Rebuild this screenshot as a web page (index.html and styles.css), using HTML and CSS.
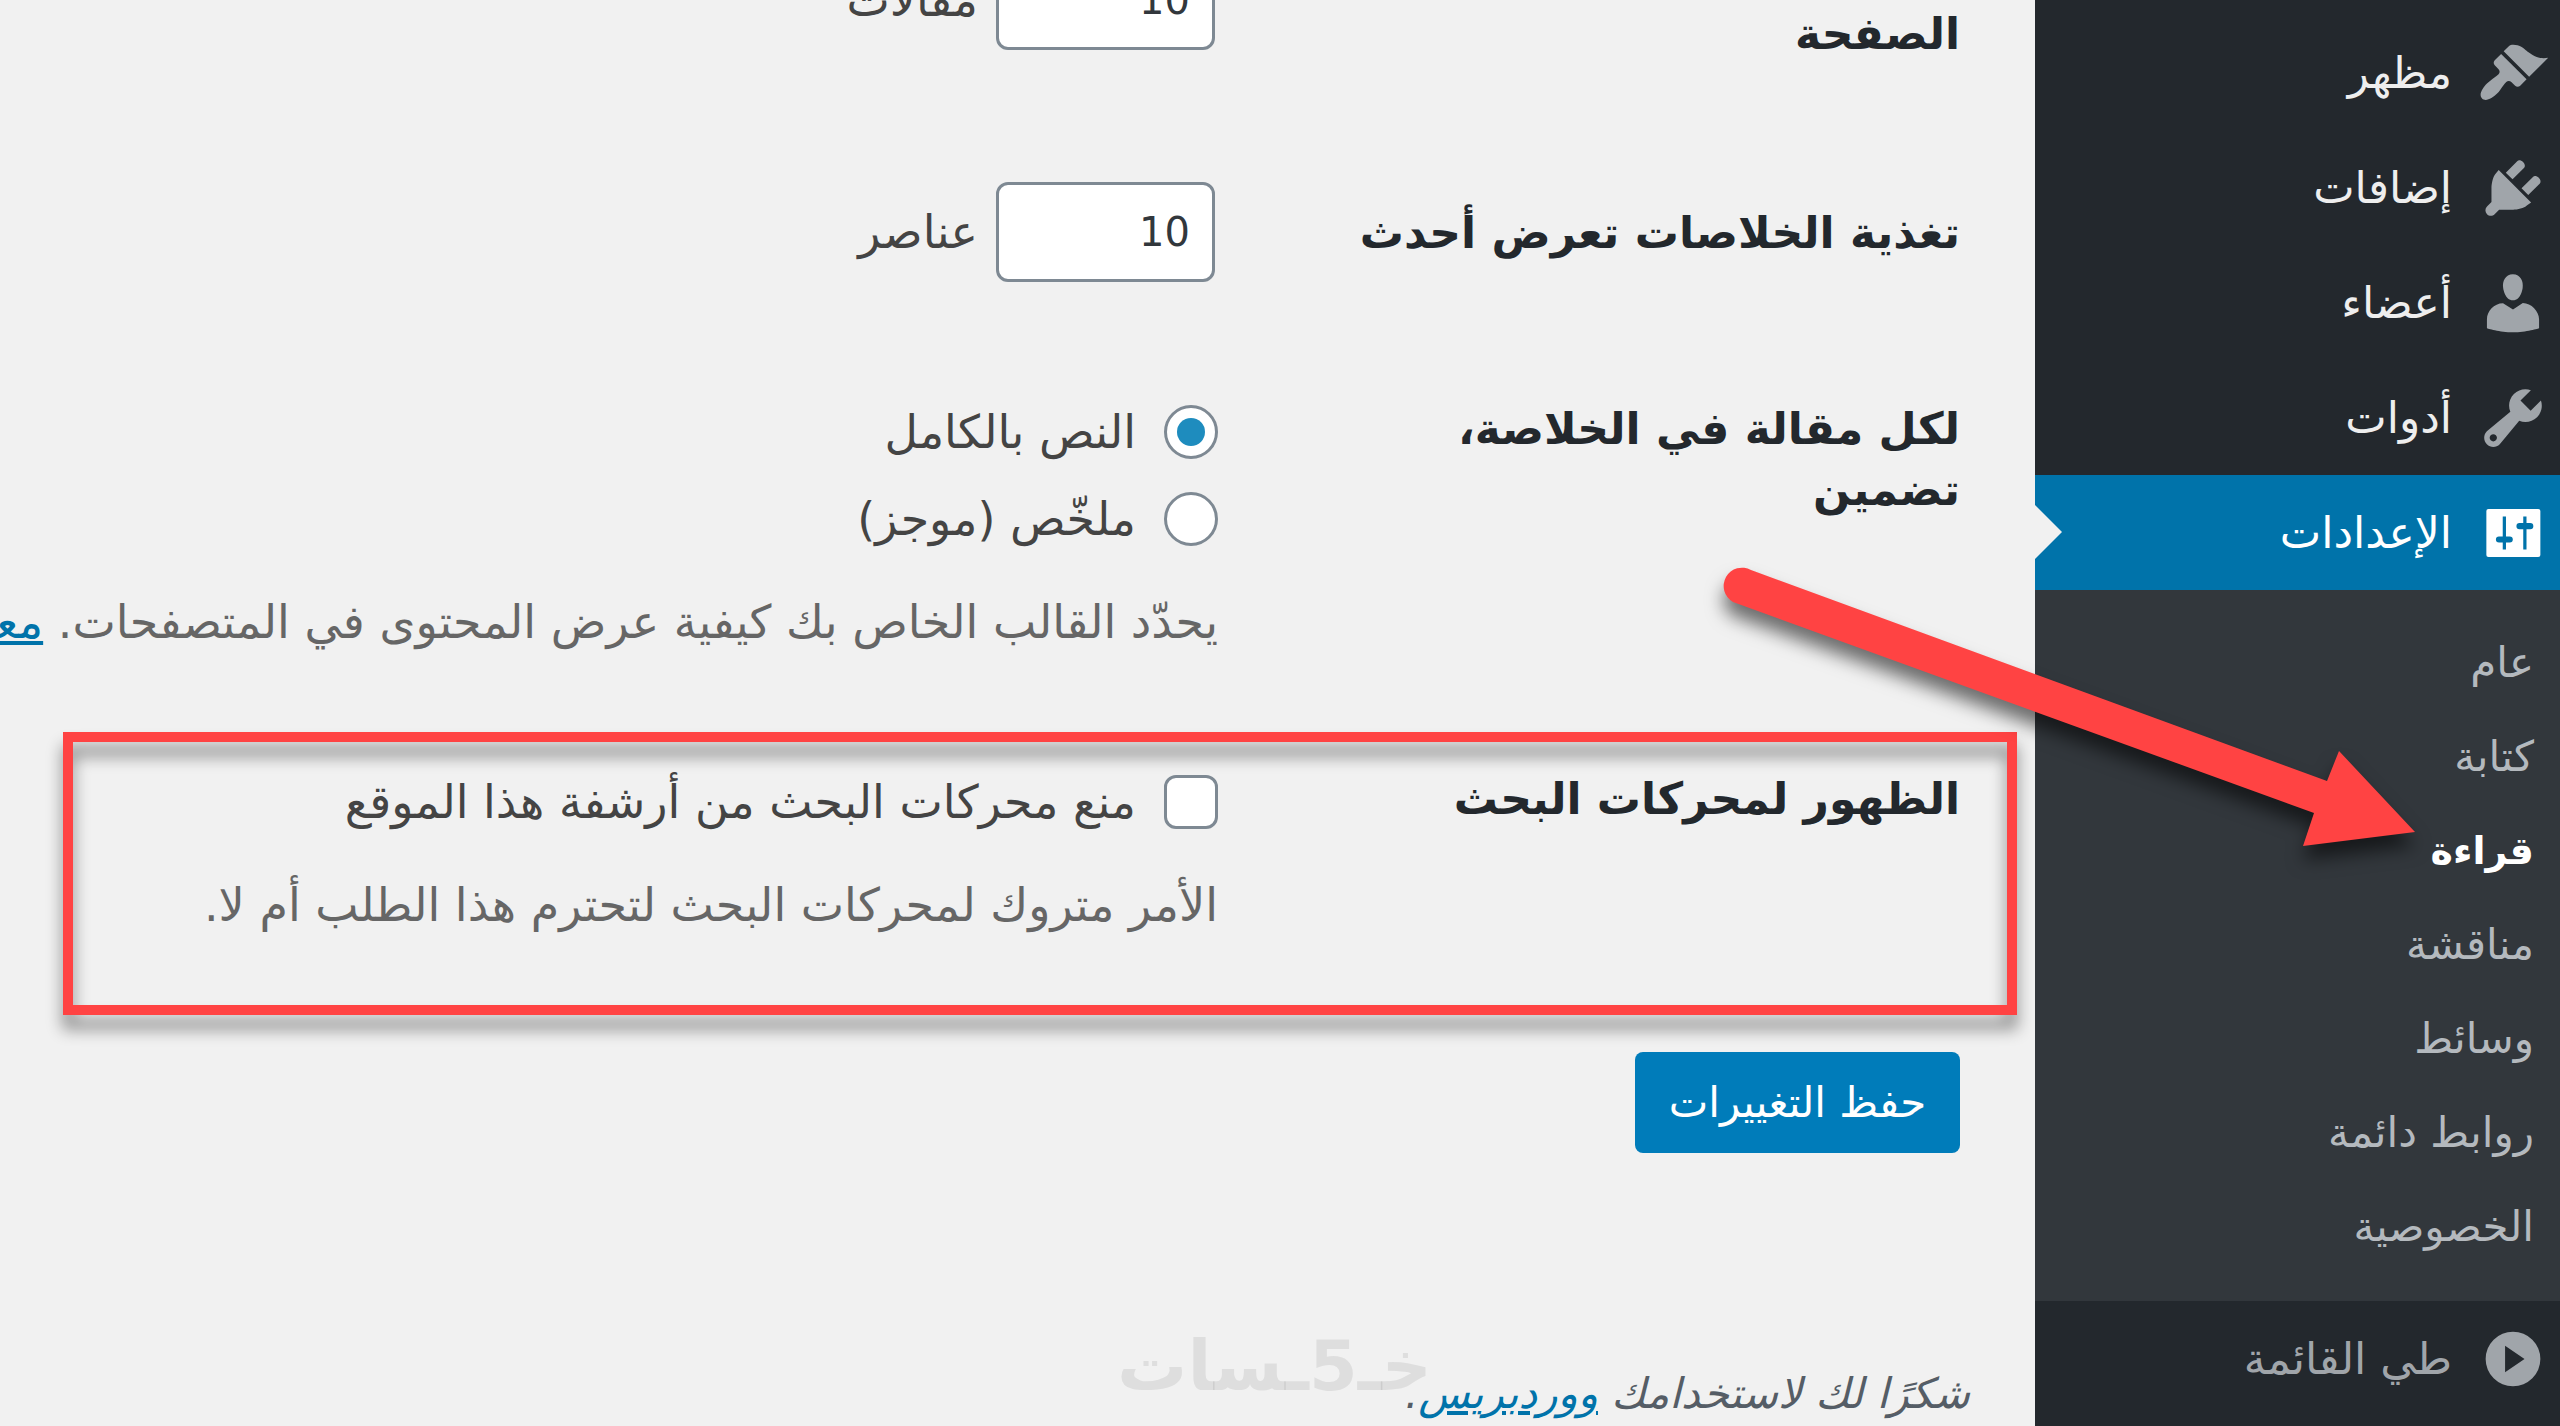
FILE: index.html
```html
<!DOCTYPE html>
<html lang="ar" dir="rtl">
<head>
<meta charset="utf-8">
<title>إعدادات القراءة</title>
<link rel="stylesheet" href="styles.css">
</head>
<body>
<nav class="sidebar">
  <ul class="menu">
    <li><a class="menu-item" href="#"><svg class="icon" viewBox="0 0 20 20"><path d="M14.48 11.06L7.41 3.99l1.5-1.5c.5-.56 2.3-.47 3.51.32 1.21.8 1.43 1.28 2.91 2.1 1.18.64 2.45 1.26 4.45.85zm-.71.71L6.7 4.7 4.93 6.47c-.39.39-.39 1.02 0 1.41l1.06 1.06c.39.39.39 1.03 0 1.42-.6.6-1.43 1.11-2.21 1.69-.35.26-.7.53-1.01.84C1.43 14.23.4 16.08 1.4 17.07c.99 1 2.84-.03 4.18-1.36.31-.31.58-.66.85-1.02.57-.78 1.08-1.61 1.69-2.21.39-.39 1.02-.39 1.41 0l1.06 1.06c.39.39 1.02.39 1.41 0z"/></svg>مظهر</a></li>
    <li><a class="menu-item" href="#"><svg class="icon" viewBox="0 0 20 20"><path d="M13.11 4.36L9.87 7.6 8 5.73l3.24-3.24c.35-.34 1.05-.2 1.56.32.52.51.66 1.21.31 1.55zm-8 1.77l.91-1.12 9.01 9.01-1.19.84c-.71.71-2.63 1.16-3.82 1.16H6.14L4.9 17.26c-.59.59-1.54.59-2.12 0-.59-.58-.59-1.53 0-2.12l1.24-1.24v-3.88c0-1.13.4-3.19 1.09-3.89zm7.26 3.97l3.24-3.24c.34-.35 1.04-.21 1.55.31.52.51.66 1.21.31 1.55l-3.24 3.25z"/></svg>إضافات</a></li>
    <li><a class="menu-item" href="#"><svg class="icon" viewBox="0 0 20 20"><path d="M10 9.25c-2.27 0-2.73-3.44-2.73-3.44C7 4.02 7.82 2 9.97 2c2.16 0 2.98 2.02 2.71 3.81 0 0-.41 3.44-2.68 3.44zm0 2.57L12.72 10c2.39 0 4.52 2.33 4.52 4.53v2.49s-3.65 1.13-7.24 1.13c-3.65 0-7.24-1.13-7.24-1.13v-2.49c0-2.25 1.94-4.48 4.47-4.48z"/></svg>أعضاء</a></li>
    <li><a class="menu-item" href="#"><svg class="icon" viewBox="0 0 20 20"><path d="M16.68 9.77c-1.34 1.34-3.3 1.67-4.95.99l-5.41 6.52c-.99.99-2.59.99-3.58 0s-.99-2.59 0-3.57l6.52-5.42c-.68-1.65-.35-3.61.99-4.95 1.28-1.28 3.12-1.62 4.72-1.06l-2.89 2.89 2.82 2.82 2.86-2.87c.53 1.58.18 3.39-1.08 4.65zM3.81 16.21c.4.39 1.04.39 1.43 0 .4-.4.4-1.04 0-1.43-.39-.4-1.03-.4-1.43 0-.39.39-.39 1.03 0 1.43z"/></svg>أدوات</a></li>
    <li>
      <a class="menu-item current" href="#"><svg class="icon" viewBox="0 0 20 20"><rect x="2.6" y="3.3" width="15" height="13.4" rx=".6"/><g class="sliders"><path d="M13.3 5.4v9.2M7.6 5.4v9.2" stroke-width=".9"/><path d="M11.8 8.1h3M6.1 11.8h3" stroke-width="1.7" stroke-linecap="round"/></g></svg>الإعدادات</a>
      <ul class="submenu">
        <li><a href="#">عام</a></li>
        <li><a href="#">كتابة</a></li>
        <li><a class="active" href="#">قراءة</a></li>
        <li><a href="#">مناقشة</a></li>
        <li><a href="#">وسائط</a></li>
        <li><a href="#">روابط دائمة</a></li>
        <li><a href="#">الخصوصية</a></li>
      </ul>
    </li>
  </ul>
  <button class="collapse" type="button"><svg class="icon" viewBox="0 0 20 20"><path fill-rule="evenodd" d="M10 2.4a7.6 7.6 0 1 1 0 15.200a7.600 7.600 0 1 1 0-15.200zM7.800 6.300v7.400l5.400-3.700z"/></svg>طي القائمة</button>
</nav>
<main class="content">
  <form>
    <table class="form-table">
      <tr class="first-row">
        <th scope="row"><label for="posts">الصفحة</label></th>
        <td><div class="field"><input class="number" id="posts" type="text" value="10"><span>مقالات</span></div></td>
      </tr>
      <tr>
        <th scope="row"><label for="feeds">تغذية الخلاصات تعرض أحدث</label></th>
        <td><div class="field"><input class="number" id="feeds" type="text" value="10"><span>عناصر</span></div></td>
      </tr>
      <tr class="choice-row">
        <th scope="row">لكل مقالة في الخلاصة، تضمين</th>
        <td>
          <label class="choice"><input type="radio" name="excerpt" checked>النص بالكامل</label>
          <label class="choice"><input type="radio" name="excerpt">ملخّص (موجز)</label>
          <p class="description">يحدّد القالب الخاص بك كيفية عرض المحتوى في المتصفحات. <a href="#">معرفة المزيد</a></p>
        </td>
      </tr>
      <tr class="choice-row">
        <th scope="row">الظهور لمحركات البحث</th>
        <td>
          <label class="choice"><input type="checkbox">منع محركات البحث من أرشفة هذا الموقع</label>
          <p class="description">الأمر متروك لمحركات البحث لتحترم هذا الطلب أم لا.</p>
        </td>
      </tr>
    </table>
    <button class="submit" type="submit">حفظ التغييرات</button>
  </form>
  <footer class="footer">شكرًا لك لاستخدامك <a href="#">ووردبريس</a>.</footer>
  <div class="highlight"></div>
  <div class="watermark">خـ5ـسات</div>
</main>
<svg class="arrow" viewBox="0 0 720 330"><path d="M71 30L647 241L659 211L735 292L623 306L634 273L53 62A18 18 0 0 1 71 30z"/></svg>
</body>
</html>
```
FILE: styles.css
```css
* { box-sizing: border-box; }

body {
  position: relative;
  display: flex;
  height: 100vh;
  margin: 0;
  overflow: hidden;
  background: #f1f1f1;
  color: #444;
  font-family: "DejaVu Sans", sans-serif;
  font-size: 46px;
  line-height: 64px;
}

ul { margin: 0; padding: 0; list-style: none; }
a { color: #0073aa; }
input, button { font: inherit; }

/* Sidebar */
.sidebar {
  flex: none;
  width: 525px;
  padding-top: 15px;
  background: #23282d;
}

.menu-item, .collapse {
  display: flex;
  align-items: center;
  gap: 25px;
  width: 100%;
  height: 115px;
  padding: 0 11px;
  color: #eee;
  font-size: 44px;
  text-decoration: none;
}

.icon { flex: none; width: 72px; height: 72px; fill: #a0a5aa; }

.current {
  position: relative;
  background: #0073aa;
  color: #fff;
}
.current .icon { fill: #fff; }
.current::after {
  content: "";
  position: absolute;
  left: 0;
  top: 30px;
  border: 27px solid transparent;
  border-left-color: #f1f1f1;
  border-right-width: 0;
}
.sliders { fill: none; stroke: #0073aa; }

.submenu { padding: 26px 0 27px; background: #32373c; }
.submenu a {
  display: block;
  padding: 0 26px;
  color: #b4b9be;
  font-size: 42px;
  line-height: 94px;
  text-decoration: none;
}
.submenu .active { color: #fff; font-size: 38px; font-weight: bold; }

.collapse { border: 0; background: none; color: #a0a5aa; }

/* Settings form */
.content {
  position: relative;
  flex: 1;
  min-width: 0;
  overflow: hidden;
  padding-right: 75px;
}

.form-table {
  width: 100%;
  margin-top: -122px;
  border-collapse: collapse;
  table-layout: fixed;
}
.form-table th {
  width: 742px;
  padding: 70px 0 62px 80px;
  color: #23282d;
  font-size: 44px;
  line-height: 61px;
  text-align: right;
  vertical-align: top;
}
.form-table td { padding: 50px 0 46px; vertical-align: top; }
.first-row { height: 254px; }
.form-table .first-row th { padding-bottom: 68px; vertical-align: bottom; }
.form-table .first-row td { padding: 46px 0 56px; vertical-align: middle; }
.form-table .choice-row td { padding: 60px 0 44px; }

.field { display: flex; align-items: center; gap: 18px; padding-right: 3px; }
.number {
  width: 219px;
  height: 100px;
  padding: 0 22px;
  border: 3px solid #7e8993;
  border-radius: 12px;
  background: #fff;
  color: #32373c;
  font-size: 40px;
}

.choice { display: flex; align-items: center; gap: 28px; height: 87px; white-space: nowrap; }
.choice + .description { margin-top: 28px; }
.choice input {
  appearance: none;
  display: grid;
  place-items: center;
  flex: none;
  width: 54px;
  height: 54px;
  margin: 0;
  border: 3px solid #7e8993;
  border-radius: 12px;
  background: #fff;
}
.choice input[type="radio"] { border-radius: 50%; }
.choice input[type="radio"]:checked::before {
  content: "";
  width: 28px;
  height: 28px;
  border-radius: 50%;
  background: #1e8cbe;
}

.description { margin: 0; color: #666; white-space: nowrap; }

.submit {
  display: block;
  width: 325px;
  height: 101px;
  margin-top: 71px;
  padding: 0;
  border: 0;
  border-radius: 8px;
  background: #007cba;
  color: #fff;
  font-size: 42px;
}

.footer {
  position: absolute;
  right: 65px;
  bottom: 0;
  color: #555d66;
  font-style: italic;
  font-size: 42px;
}

/* Annotations over the page */
.highlight {
  position: absolute;
  top: 732px;
  right: 18px;
  left: 63px;
  height: 283px;
  border: 10px solid #ff4343;
  filter: drop-shadow(0 14px 8px rgba(0, 0, 0, .45));
  pointer-events: none;
}
.arrow {
  position: absolute;
  top: 540px;
  right: 160px;
  width: 720px;
  height: 330px;
  overflow: visible;
  fill: #ff4343;
  filter: drop-shadow(0 14px 9px rgba(0, 0, 0, .55));
  pointer-events: none;
}
.watermark {
  position: absolute;
  right: 603px;
  bottom: 28px;
  color: rgba(0, 0, 0, .08);
  font-size: 70px;
  font-weight: bold;
  pointer-events: none;
}
```
